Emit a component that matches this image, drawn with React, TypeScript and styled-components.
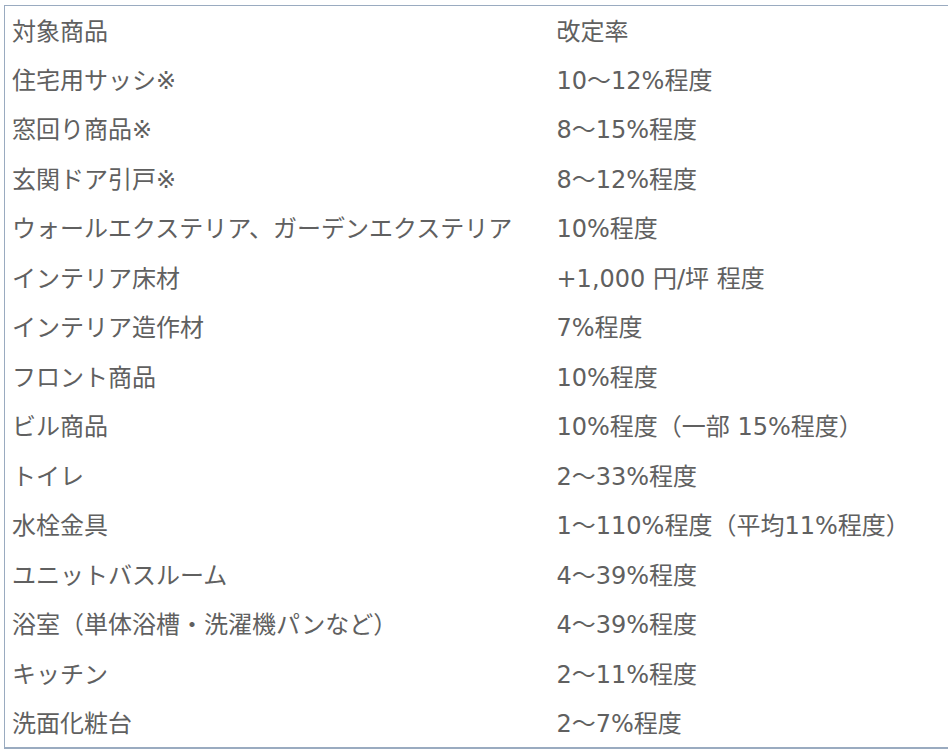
import React from "react";
import styled, { createGlobalStyle } from "styled-components";

const GlobalStyle = createGlobalStyle`
  html, body {
    margin: 0;
    padding: 0;
    background: #fff;
    overflow: hidden;
  }
  body {
    font-family: "DejaVu Sans", "Noto Sans CJK JP", sans-serif;
  }
`;

const Page = styled.div`
  padding: 5px 0 0 4px;
`;

const Table = styled.table`
  width: 980px;
  border-collapse: collapse;
  border-top: 1px solid #9aabc0;
  border-left: 1px solid #9aabc0;
  border-bottom: 2px solid #9aabc0;
  table-layout: fixed;
  color: #606060;
  font-size: 24px;
`;

const Cell = styled.td<{ $first?: boolean }>`
  width: ${(p) => (p.$first ? "544px" : "auto")};
  height: 49.5px;
  padding: 3px 0 0 ${(p) => (p.$first ? "7px" : "8px")};
  box-sizing: border-box;
  vertical-align: middle;
  white-space: nowrap;
  line-height: 1.2;
`;

const rows: [string, string][] = [
  ["対象商品", "改定率"],
  ["住宅用サッシ※", "10～12%程度"],
  ["窓回り商品※", "8～15%程度"],
  ["玄関ドア引戸※", "8～12%程度"],
  ["ウォールエクステリア、ガーデンエクステリア", "10%程度"],
  ["インテリア床材", "+1,000 円/坪 程度"],
  ["インテリア造作材", "7%程度"],
  ["フロント商品", "10%程度"],
  ["ビル商品", "10%程度（一部 15%程度）"],
  ["トイレ", "2～33%程度"],
  ["水栓金具", "1～110%程度（平均11%程度）"],
  ["ユニットバスルーム", "4～39%程度"],
  ["浴室（単体浴槽・洗濯機パンなど）", "4～39%程度"],
  ["キッチン", "2～11%程度"],
  ["洗面化粧台", "2～7%程度"],
];

export default function App() {
  return (
    <Page>
      <GlobalStyle />
      <Table>
        <tbody>
          {rows.map(([name, rate]) => (
            <tr key={name}>
              <Cell $first>{name}</Cell>
              <Cell>{rate}</Cell>
            </tr>
          ))}
        </tbody>
      </Table>
    </Page>
  );
}
